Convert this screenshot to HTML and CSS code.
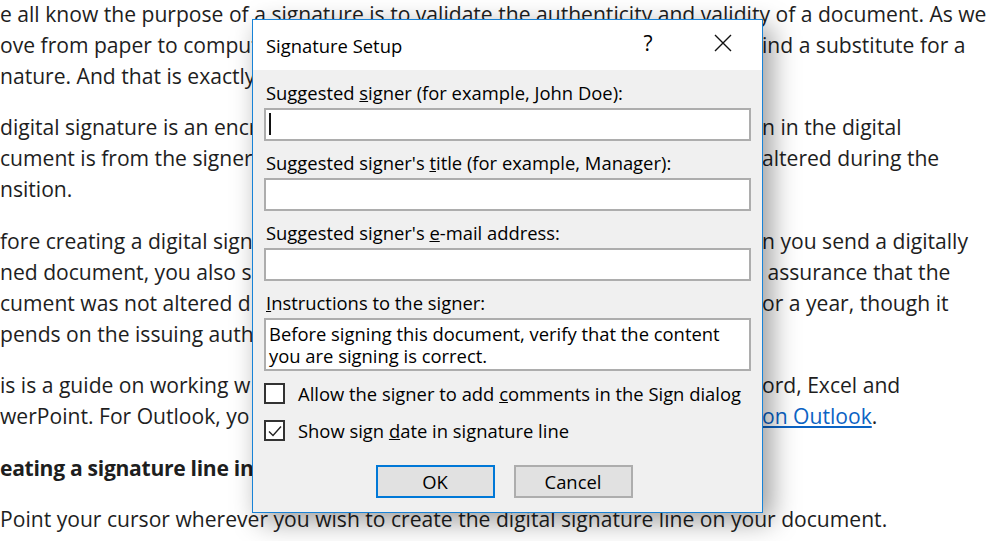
FILE: index.html
```html
<!DOCTYPE html>
<html lang="en">

<head>
  <meta charset="UTF-8">
  <meta name="viewport" content="width=device-width, initial-scale=1.0">
  <title>Signature Setup</title>
  <link rel="stylesheet" href="styles.css">
</head>

<body>
  <div class="article">
    <div class="para">
      <div class="line">e all know the purpose of a signature is to validate the authenticity and validity of a document. As we</div>
      <div class="split"><span>ove from paper to comput</span><span>ind a substitute for a</span></div>
      <div class="split"><span>nature. And that is exactly</span><span></span></div>
    </div>
    <div class="para">
      <div class="split"><span>digital signature is an encr</span><span>n in the digital</span></div>
      <div class="split"><span>cument is from the signer</span><span>altered during the</span></div>
      <div class="split"><span>nsition.</span><span></span></div>
    </div>
    <div class="para">
      <div class="split"><span>fore creating a digital sign</span><span>n you send a digitally</span></div>
      <div class="split"><span>ned document, you also s</span><span>&nbsp;assurance that the</span></div>
      <div class="split"><span>cument was not altered d</span><span>or a year, though it</span></div>
      <div class="split"><span>pends on the issuing auth</span><span></span></div>
    </div>
    <div class="para">
      <div class="split"><span>is is a guide on working w</span><span>ord, Excel and</span></div>
      <div class="split"><span>werPoint. For Outlook, yo</span><span><a href="#">on Outlook</a>.</span></div>
    </div>
    <div class="para">
      <div class="split heading"><span>eating a signature line in W</span><span></span></div>
    </div>
    <div class="para">
      <div class="line">Point your cursor wherever you wish to create the digital signature line on your document.</div>
    </div>
  </div>

  <div class="dialog">
    <div class="titlebar">
      <span class="title">Signature Setup</span>
      <span class="help">?</span>
      <span class="close">
        <svg width="18" height="18" viewBox="0 0 18 18">
          <path d="M1 1 L17 17 M17 1 L1 17" stroke="#111" stroke-width="1.4" fill="none" />
        </svg>
      </span>
    </div>
    <div class="dlg-body">
      <div class="fld first">Suggested <u>s</u>igner (for example, John Doe):</div>
      <div class="input"><span class="caret"></span></div>
      <div class="fld">Suggested signer's <u>t</u>itle (for example, Manager):</div>
      <div class="input"></div>
      <div class="fld">Suggested signer's <u>e</u>-mail address:</div>
      <div class="input"></div>
      <div class="fld"><u>I</u>nstructions to the signer:</div>
      <div class="input memo">Before signing this document, verify that the content<br>you are signing is correct.</div>
      <div class="check first-check"><span class="box"></span><span>Allow the signer to add <u>c</u>omments in the Sign dialog</span></div>
      <div class="check"><span class="box">
          <svg width="16" height="16" viewBox="0 0 16 16">
            <path d="M2 8.5 L6 12.5 L14 3.5" stroke="#222" stroke-width="1.4" fill="none" />
          </svg>
        </span><span>Show sign <u>d</u>ate in signature line</span></div>
      <div class="buttons">
        <button class="btn default">OK</button>
        <button class="btn">Cancel</button>
      </div>
    </div>
  </div>
</body>

</html>
```

FILE: styles.css
```css
* {
  margin: 0;
  padding: 0;
  box-sizing: border-box;
}

body {
  width: 1000px;
  height: 541px;
  overflow: hidden;
  background-color: #fff;
  font-family: "Open Sans", "Noto Sans", sans-serif;
  color: #1e1e1e;
}

.article {
  margin-top: -2px;
  font-size: 21.1px;
  line-height: 31px;
  white-space: nowrap;
}

.para {
  margin-bottom: 20.4px;
}

.split {
  display: grid;
  grid-template-columns: 252px 1fr;
  column-gap: 510px;
}

.split span {
  overflow: hidden;
}

.heading {
  font-weight: bold;
  letter-spacing: -.3px;
}

.article a {
  color: #0b63c4;
  text-decoration: underline;
}

/* dialog over the page */
.dialog {
  position: absolute;
  left: 252px;
  top: 19px;
  width: 511px;
  height: 494px;
  border: 1px solid #1883d7;
  background-color: #f0f0f0;
  box-shadow: 8px 8px 26px rgba(0, 0, 0, .4);
  font-size: 18.4px;
  color: #000;
}

.titlebar {
  display: flex;
  align-items: center;
  height: 50px;
  padding-left: 13px;
  padding-right: 16px;
  background-color: #fff;
}

.title {
  flex: 1;
  font-size: 18.4px;
}

.help {
  width: 46px;
  margin-right: 29px;
  text-align: center;
  font-size: 21px;
  margin-top: -4px;
}

.close {
  display: flex;
  justify-content: center;
  width: 46px;
  margin-top: -4px;
}

.dlg-body {
  padding: 0 11px;
}

.fld {
  margin-top: 11px;
  padding-left: 2px;
  line-height: 22px;
}

.fld.first {
  margin-top: 12px;
}

.input {
  position: relative;
  height: 33px;
  margin-top: 4px;
  border: 2px solid #adadad;
  background-color: #fff;
}

.caret {
  position: absolute;
  left: 3px;
  top: 3px;
  width: 2px;
  height: 22px;
  background-color: #111;
}

.input.memo {
  height: 53px;
  padding: 3px 3px;
  line-height: 22px;
}

.check {
  display: flex;
  align-items: center;
  gap: 13px;
  margin-top: 16px;
  line-height: 21px;
}

.check.first-check {
  margin-top: 12px;
}

.box {
  display: flex;
  align-items: center;
  justify-content: center;
  width: 21px;
  height: 21px;
  border: 2px solid #333;
  background-color: #fff;
}

.buttons {
  display: flex;
  justify-content: center;
  gap: 19px;
  margin-top: 24px;
  padding-right: 7px;
}

.btn {
  width: 119px;
  height: 33px;
  border: 2px solid #adadad;
  background-color: #e1e1e1;
  font-family: inherit;
  font-size: 18.4px;
  color: #000;
}

.btn.default {
  border-color: #0078d7;
}
```
